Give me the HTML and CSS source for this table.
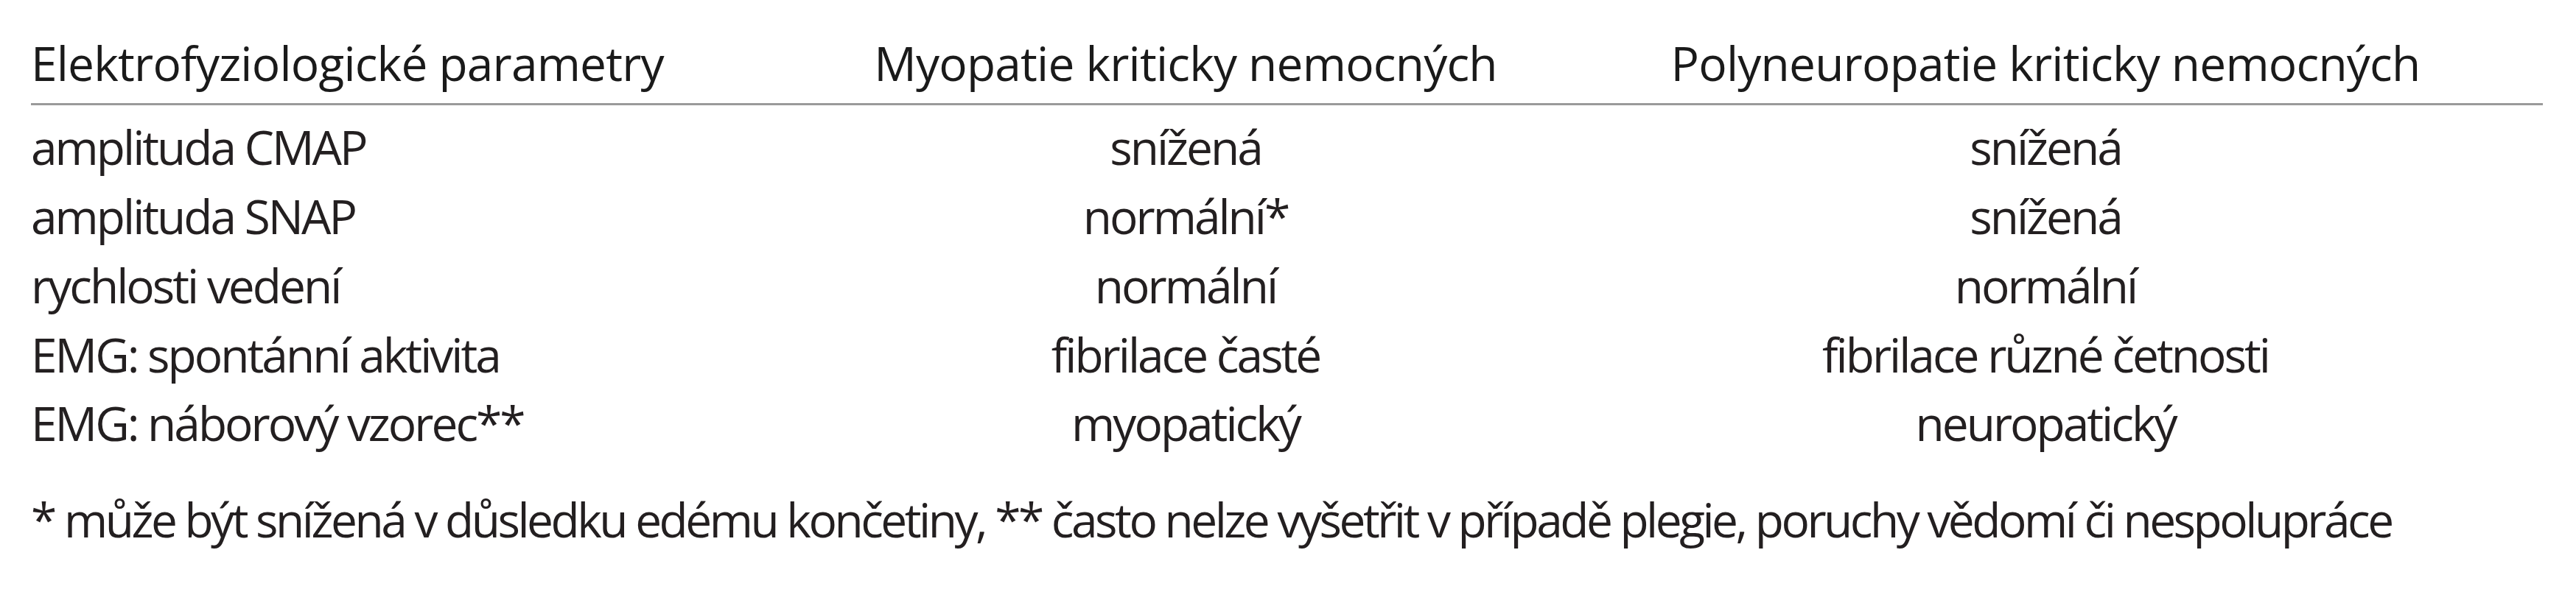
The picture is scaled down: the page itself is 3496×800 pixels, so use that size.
FILE: index.html
```html
<!DOCTYPE html>
<html lang="cs">
<head>
<meta charset="utf-8">
<title>Elektrofyziologické parametry</title>
<link rel="stylesheet" href="styles.css">
</head>
<body>
<div class="page">
  <div class="table">
    <div class="row head">
      <div class="cell first">Elektrofyziologické parametry</div>
      <div class="cell">Myopatie kriticky nemocných</div>
      <div class="cell">Polyneuropatie kriticky nemocných</div>
    </div>
    <div class="body">
      <div class="row">
        <div class="cell first">amplituda CMAP</div>
        <div class="cell">snížená</div>
        <div class="cell">snížená</div>
      </div>
      <div class="row">
        <div class="cell first">amplituda SNAP</div>
        <div class="cell">normální*</div>
        <div class="cell">snížená</div>
      </div>
      <div class="row">
        <div class="cell first">rychlosti vedení</div>
        <div class="cell">normální</div>
        <div class="cell">normální</div>
      </div>
      <div class="row">
        <div class="cell first">EMG: spontánní aktivita</div>
        <div class="cell">fibrilace časté</div>
        <div class="cell">fibrilace různé četnosti</div>
      </div>
      <div class="row">
        <div class="cell first">EMG: náborový vzorec**</div>
        <div class="cell">myopatický</div>
        <div class="cell">neuropatický</div>
      </div>
    </div>
  </div>
  <p class="note">* může být snížená v důsledku edému končetiny, ** často nelze vyšetřit v případě plegie, poruchy vědomí či nespolupráce</p>
</div>
</body>
</html>
```

FILE: styles.css
```css
html, body {
  margin: 0;
  padding: 0;
  background: #ffffff;
}

.page {
  padding: 39px 42px 0 42px;
  font-family: "Open Sans", "Noto Sans", sans-serif;
  font-size: 64px;
  line-height: 93.75px;
  color: #231f20;
}

.table {
  width: 3409px;
}

.row {
  display: grid;
  grid-template-columns: 1075px 984px 1350px;
}

.cell {
  text-align: center;
  white-space: nowrap;
  letter-spacing: -3px;
}

.cell.first {
  text-align: left;
}

.head {
  padding-bottom: 7px;
  border-bottom: 3px solid #9a9a9a;
  color: #1a1a1a;
}

.head .cell {
  letter-spacing: -0.8px;
}

.body {
  padding-top: 10.5px;
}

.note {
  margin: 37px 0 0 0;
  white-space: nowrap;
  letter-spacing: -3.5px;
}
```
